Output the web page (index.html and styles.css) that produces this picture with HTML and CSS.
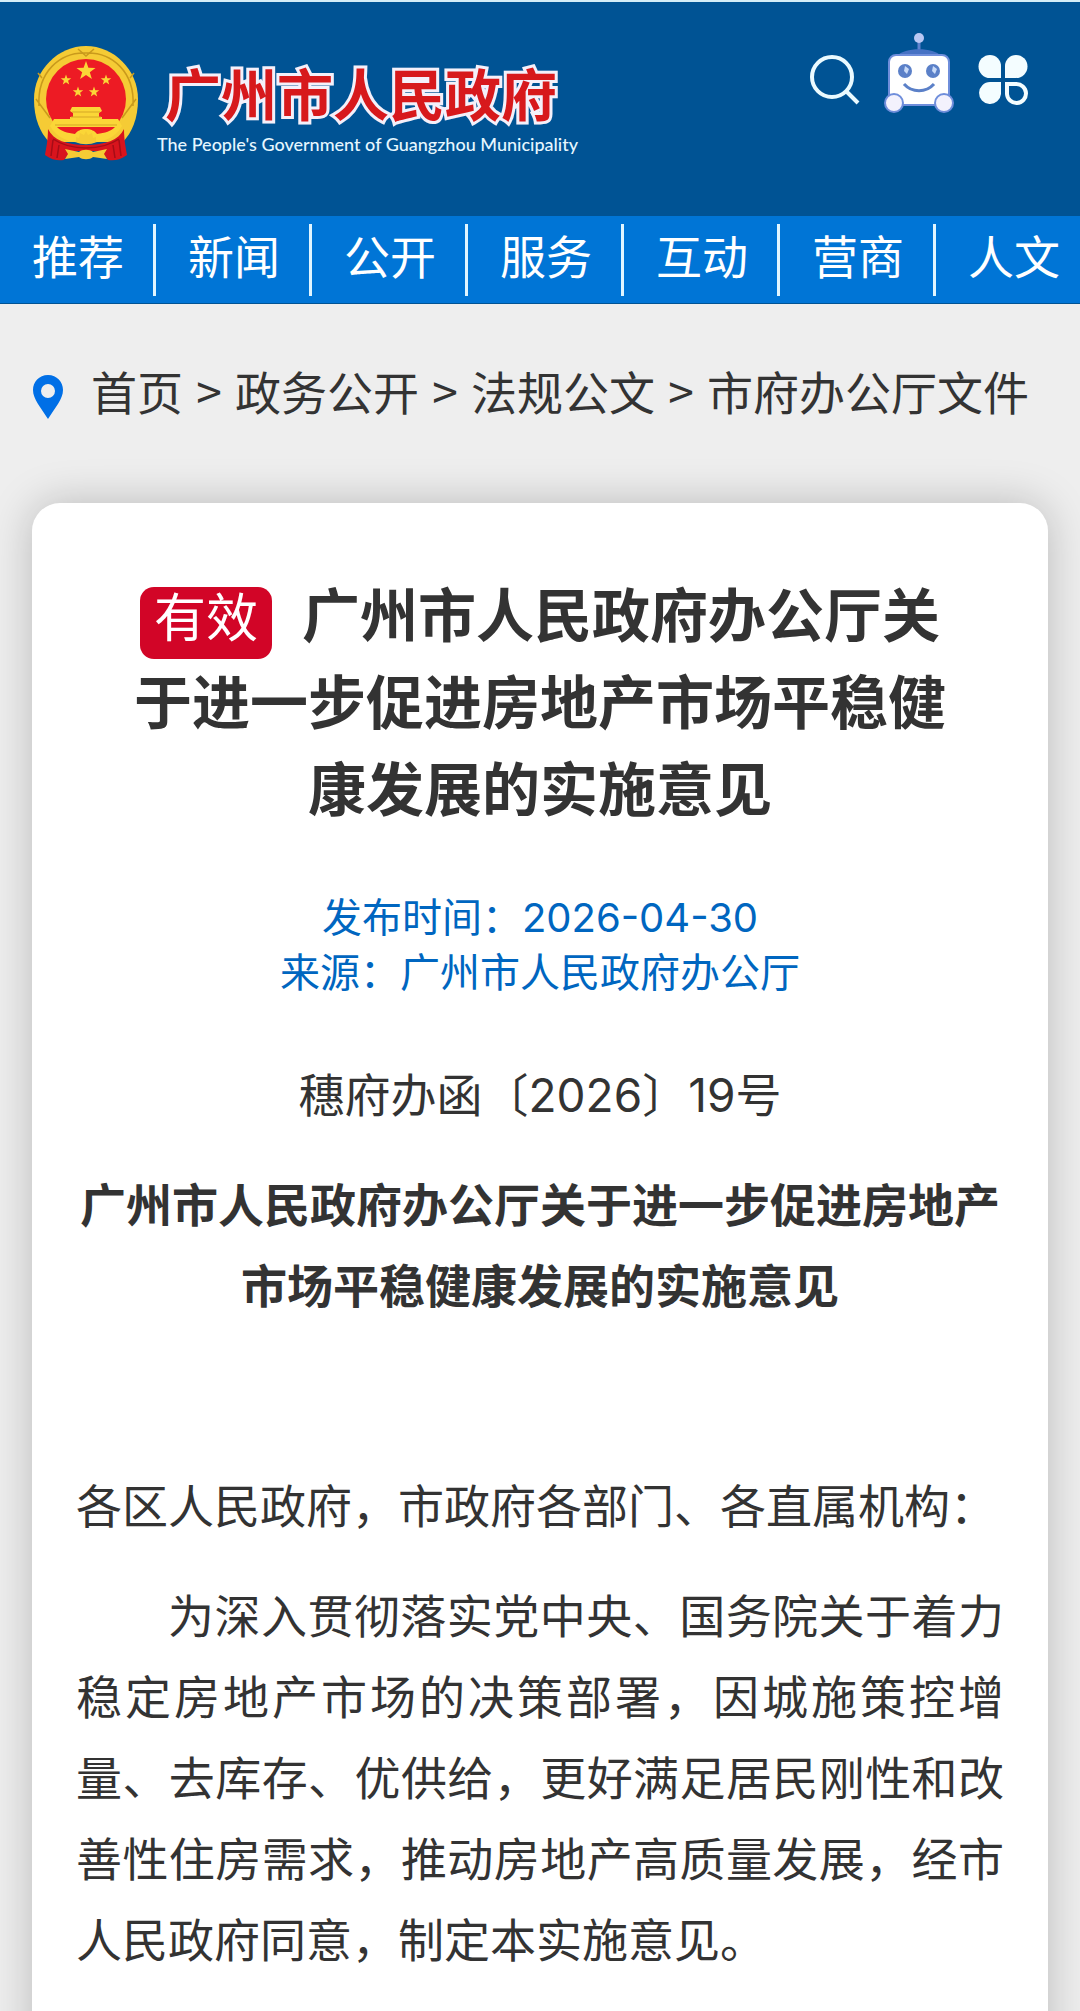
FILE: index.html
```html
<!DOCTYPE html>
<html lang="zh-CN">
<head>
    <meta charset="UTF-8">
    <meta name="viewport" content="width=device-width, initial-scale=1.0">
    <title>广州市人民政府</title>
    <link rel="stylesheet" href="styles.css">
</head>
<body>

<header class="header">
    <a class="logo" href="#">
        <svg class="emblem" viewBox="0 0 106 116" aria-hidden="true">
            <defs>
                <polygon id="star" points="0,-10 2.4,-3.2 9.5,-3.1 3.8,1.3 5.9,8.1 0,4 -5.9,8.1 -3.8,1.3 -9.5,-3.1 -2.4,-3.2"/>
            </defs>
            <path fill="#f5cb35" d="M53 1C25 1 1 25 1 54c0 20 6 33 15 43h74c9-10 15-23 15-43C105 25 81 1 53 1z"/>
            <path fill="none" stroke="#c99a1c" stroke-width="1.5" d="M6 61C4 27 27 7 53 8c26-1 49 19 47 53M9 33l-4-5M97 33l4-5M45 4l8 7 8-7M3 54l14 19M103 54L89 73"/>
            <circle cx="53" cy="54" r="40" fill="#ed1b24"/>
            <g fill="#fbd637">
                <use href="#star" transform="translate(53 26)"/>
                <use href="#star" transform="translate(33 35) scale(.55)"/>
                <use href="#star" transform="translate(73 35) scale(.55)"/>
                <use href="#star" transform="translate(45 47) scale(.55)"/>
                <use href="#star" transform="translate(61 47) scale(.55)"/>
                <path d="M39 62h28l2 4-3 2v4h3v3H37v-3h3v-4l-3-2z"/>
                <path d="M21 74h64l4 7c-7 12-19 17-36 17s-29-5-36-17z"/>
            </g>
            <path fill="none" stroke="#d5a726" d="M39 67h28M38 72h30M22 80h62"/>
            <path fill="#ed1b24" d="M24 82h58c-4 4-10 6-18 7-2-3-6-5-11-5s-9 2-11 5c-8-1-14-3-18-7z"/>
            <path fill="#d8141d" d="M15 84c5 11 19 16 38 16s33-5 38-16c0 11 2 20 3 26-7 5-13 6-19 5l-7-9H38l-7 9c-6 1-12 0-19-5 1-6 3-15 3-26z"/>
            <path fill="none" stroke="#a50d17" stroke-width="1.5" d="M20 95l-2 16M26 100l-2 13M86 95l2 16M80 100l2 13M20 94c18 12 48 12 66 0"/>
            <path fill="#f5cb35" d="M32 104l14 3c3-3 11-3 14 0l14-3-3 5 3 5-14-2c-3 3-11 3-14 0l-14 2 3-5z"/>
            <path fill="#f5cb35" d="M43 97v-5l3 1 1-5 4 2 2-4 2 4 4-2 1 5 3-1v5c-5 3-15 3-20 0z"/>
        </svg>
        <span class="logo-text">
            <span class="logo-name">广州市人民政府</span>
            <span class="logo-sub">The People's Government of Guangzhou Municipality</span>
        </span>
    </a>
    <div class="tools">
        <button class="tool" aria-label="搜索">
            <svg width="50" height="50" viewBox="0 0 50 50" fill="none" stroke="#eafaff" stroke-width="4">
                <circle cx="22" cy="22" r="20"/>
                <path d="M36 36l12 12"/>
            </svg>
        </button>
        <button class="tool robot" aria-label="智能问答">
            <svg width="70" height="84" viewBox="0 0 70 84">
                <path stroke="#5f83cf" stroke-width="3" d="M35 8v12"/>
                <circle cx="35" cy="7" r="5" fill="#b9c8f4"/>
                <path fill="#4772c4" d="M13 25c7-9 37-9 44 0z"/>
                <rect x="5" y="24" width="60" height="50" rx="7" fill="#fff" stroke="#6f8edb" stroke-width="2"/>
                <circle cx="21" cy="40" r="7" fill="#5b80c8"/>
                <circle cx="49" cy="40" r="7" fill="#5b80c8"/>
                <path fill="#c8daf8" d="M21 35l4 3-2 5-3-3zM49 35l4 3-2 5-3-3z"/>
                <path fill="none" stroke="#5b80c8" stroke-width="3" d="M20 53c8 9 22 9 30 0"/>
                <circle cx="10" cy="72" r="9" fill="#f3f2fd" stroke="#6f8edb" stroke-width="2"/>
                <circle cx="60" cy="72" r="9" fill="#f3f2fd" stroke="#6f8edb" stroke-width="2"/>
            </svg>
        </button>
        <button class="tool" aria-label="菜单">
            <svg width="50" height="50" viewBox="0 0 50 50" fill="#f4fdff">
                <path d="M12 0a11 11 0 0 1 11 11v12H12A11.500 11.500 0 0 1 12 0z"/>
                <path d="M38 0a11.500 11.500 0 0 1 0 23H27V11A11 11 0 0 1 38 0z"/>
                <path d="M12 27h11v12a11 11 0 1 1-11-12z"/>
                <path fill="none" stroke="#f4fdff" stroke-width="4" d="M29 29h9a9.500 9.500 0 1 1-9 10z"/>
            </svg>
        </button>
    </div>
</header>

<nav class="nav">
    <a href="#">推荐</a>
    <a href="#">新闻</a>
    <a href="#">公开</a>
    <a href="#">服务</a>
    <a href="#">互动</a>
    <a href="#">营商</a>
    <a href="#">人文</a>
</nav>

<!-- 当前位置 -->
<div class="crumbs">
    <svg class="pin" width="32" height="44" viewBox="0 0 32 44" aria-hidden="true">
        <path fill="#006fe6" fill-rule="evenodd" d="M16 0C7 0 1 7 1 15c0 9 8 18 15 29 7-11 15-20 15-29C31 7 25 0 16 0zm0 9a7 7 0 1 1 0 14 7 7 0 0 1 0-14z"/>
    </svg>
    <a href="#">首页</a>
    <span>&gt;</span>
    <a href="#">政务公开</a>
    <span>&gt;</span>
    <a href="#">法规公文</a>
    <span>&gt;</span>
    <a href="#">市府办公厅文件</a>
</div>

<main class="card">
    <h1 class="title"><span class="badge">有效</span>广州市人民政府办公厅关于进一步促进房地产市场平稳健康发展的实施意见</h1>
    <div class="meta">
        <div>发布时间：<span class="num">2026-04-30</span></div>
        <div>来源：广州市人民政府办公厅</div>
    </div>

    <!-- 正文 -->
    <article class="content">
        <p class="center">穗府办函〔<span class="num">2026</span>〕<span class="num">19</span>号</p>
        <p class="center"><strong>广州市人民政府办公厅关于进一步促进房地产市场平稳健康发展的实施意见</strong></p>
        <p>&nbsp;</p>
        <p>各区人民政府，市政府各部门、各直属机构：</p>
        <p class="indent">为深入贯彻落实党中央、国务院关于着力稳定房地产市场的决策部署，因城施策控增量、去库存、优供给，更好满足居民刚性和改善性住房需求，推动房地产高质量发展，经市人民政府同意，制定本实施意见。</p>
    </article>
</main>

</body>
</html>
```

FILE: styles.css
```css
* { box-sizing: border-box; }
body { margin: 0; background-color: #eeeeee; color: #333; font-family: "Noto Sans CJK SC", sans-serif; font-size: 46px; }
a { color: inherit; text-decoration: none; }
svg { display: block; }

/* 页头 */
.header { display: flex; justify-content: space-between; align-items: flex-start; height: 216px; padding: 0 52px 0 33px; background-color: #005394; border-top: 2px solid #d5eef8; }
.logo { display: flex; margin-top: 43px; }
.emblem { width: 106px; height: 116px; }
.logo-text { display: flex; flex-direction: column; margin-left: 18px; }
.logo-name { margin: 8px 0 0 8px; font-size: 56px; line-height: 78px; font-weight: 700; color: #d7191c; -webkit-text-stroke: 6px #f4f0fa; paint-order: stroke fill; }
.logo-sub { font-family: Lato, sans-serif; font-size: 18px; line-height: 26px; font-weight: 500; color: #e6f7ff; }
.tools { display: flex; align-items: flex-start; gap: 24px; margin-top: 53px; }
.tool { padding: 0; border: none; background: none; cursor: pointer; }
.robot { margin-top: -24px; }

/* 导航 */
.nav { display: flex; height: 88px; padding: 8px 0; background-color: #0075d6; border-bottom: 1px solid #005394; overflow: hidden; }
.nav a { flex: none; height: 72px; padding: 0 29px 0 32px; border-right: 3px solid #e0f5ff; color: #fff; line-height: 61px; }
.nav a:last-child { border-right: none; }

.crumbs { display: flex; align-items: center; gap: 13px; margin-top: 52px; padding: 0 32px; line-height: 68px; white-space: nowrap; }
.crumbs span { width: 26px; text-align: center; }
.pin { margin: 14px 14px 0 0; }

/* 文章 */
.card { margin: 79px 32px 0; padding: 66px 44px 60px; background-color: #fff; border-radius: 28px 28px 0 0; box-shadow: 0 0 44px rgba(0, 0, 0, 0.22); }
.title { margin: 0 52px; font-size: 58px; line-height: 87px; font-weight: 700; text-align: center; }
.badge { display: inline-block; height: 72px; margin: 0 30px -8px 0; padding: 0 14px; border-radius: 14px; background-color: #d20527; color: #fff; font-size: 52px; line-height: 56px; font-weight: 400; }
.meta { margin-top: 58px; color: #0066c0; font-size: 40px; line-height: 55px; text-align: center; }
.content { margin-top: 54px; }
.content p { margin: 0 0 29px; line-height: 81px; text-align: justify; }
.content .center { text-align: center; }
.content .indent { text-indent: 2em; }
.num { font-family: Inter, sans-serif; line-height: 1; }
```
